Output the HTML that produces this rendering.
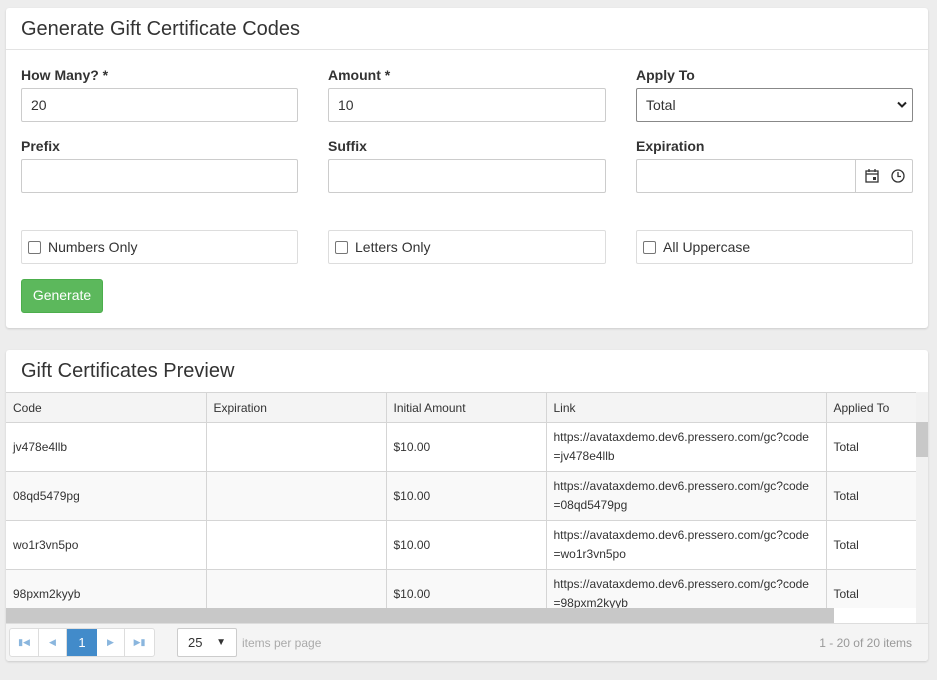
<!DOCTYPE html>
<html><head><style>
*{box-sizing:border-box;margin:0;padding:0}
body{width:937px;height:680px;background:#ededed;font-family:"Liberation Sans",Arial,sans-serif;color:#333;position:relative;overflow:hidden}
.panel{position:absolute;left:6px;width:922px;background:#fff;border-radius:3px;box-shadow:0 1px 2px rgba(0,0,0,.15)}
.title{font-size:20px;color:#333;padding:0 15px}
.lbl{position:absolute;font-size:14px;font-weight:bold;color:#333}
.inp{position:absolute;height:34px;border:1px solid #ccc;border-radius:2px;font-size:14px;padding:8px 9px;background:#fff}
.chk{position:absolute;height:34px;border:1px solid #ddd;border-radius:2px;font-size:14px;padding:8px 6px;width:277px}
.chk i{display:inline-block;width:13px;height:13px;border:1px solid #767676;border-radius:2px;vertical-align:-2px;margin-right:7px}
.btn{position:absolute;left:15px;top:271px;width:82px;height:34px;background:#5cb85c;border:1px solid #4cae4c;border-radius:3px;color:#fff;font-size:14px;text-align:center;line-height:31px}
table{border-collapse:collapse;position:absolute;left:0;top:42px;font-size:12px;table-layout:fixed}
td,th{border:1px solid #d5d5d5;padding:0 7px;text-align:left;font-weight:normal;vertical-align:middle}
th{height:30px;background:#f4f4f4;border-top:1px solid #d5d5d5}
td{height:49px}
tr:nth-child(odd) td{background:#f9f9f9}
.pg{position:absolute;font-size:12px}
</style></head><body>
<div class="panel" style="top:8px;height:320px">
 <div class="title" style="height:42px;line-height:42px;border-bottom:1px solid #e3e3e3">Generate Gift Certificate Codes</div>
 <div class="lbl" style="left:15px;top:59px">How Many? *</div>
 <div class="lbl" style="left:322px;top:59px">Amount *</div>
 <div class="lbl" style="left:630px;top:59px">Apply To</div>
 <div class="inp" style="left:15px;top:80px;width:277px">20</div>
 <div class="inp" style="left:322px;top:80px;width:278px">10</div>
 <div class="inp" style="left:630px;top:80px;width:277px;border-color:#888">Total<svg style="position:absolute;right:5px;top:12px" width="10" height="8" viewBox="0 0 10 8"><path d="M1 1.5L5 5.5L9 1.5" fill="none" stroke="#222" stroke-width="2"/></svg></div>
 <div class="lbl" style="left:15px;top:130px">Prefix</div>
 <div class="lbl" style="left:322px;top:130px">Suffix</div>
 <div class="lbl" style="left:630px;top:130px">Expiration</div>
 <div class="inp" style="left:15px;top:151px;width:277px"></div>
 <div class="inp" style="left:322px;top:151px;width:278px"></div>
 <div class="inp" style="left:630px;top:151px;width:277px;padding:0">
  <div style="position:absolute;left:218px;top:0;bottom:0;border-left:1px solid #ccc"></div>
  <svg style="position:absolute;left:227px;top:8px" width="16" height="16" viewBox="0 0 16 16"><rect x="2" y="3" width="12" height="11" fill="none" stroke="#333" stroke-width="1.3"/><line x1="2" y1="6" x2="14" y2="6" stroke="#333" stroke-width="1.3"/><line x1="5" y1="1" x2="5" y2="4" stroke="#333" stroke-width="1.3"/><line x1="11" y1="1" x2="11" y2="4" stroke="#333" stroke-width="1.3"/><rect x="9" y="9" width="3" height="3" fill="#333"/></svg>
  <svg style="position:absolute;left:253px;top:8px" width="16" height="16" viewBox="0 0 16 16"><circle cx="8" cy="8" r="6" fill="none" stroke="#333" stroke-width="1.3"/><path d="M8 4V8.5H11" fill="none" stroke="#333" stroke-width="1.3"/></svg>
 </div>
 <div class="chk" style="left:15px;top:222px"><i></i>Numbers Only</div>
 <div class="chk" style="left:322px;top:222px;width:278px"><i></i>Letters Only</div>
 <div class="chk" style="left:630px;top:222px"><i></i>All Uppercase</div>
 <div class="btn">Generate</div>
</div>
<div class="panel" style="top:350px;height:311px;overflow:hidden">
 <div class="title" style="height:42px;line-height:42px">Gift Certificates Preview</div>
 <table>
  <colgroup><col style="width:200px"><col style="width:180px"><col style="width:160px"><col style="width:280px"><col style="width:90px"></colgroup>
  <tr><th style="border-left:none">Code</th><th>Expiration</th><th>Initial Amount</th><th>Link</th><th>Applied To</th></tr>
  <tr><td style="border-left:none">jv478e4llb</td><td></td><td>$10.00</td><td style="line-height:19px">https://avataxdemo.dev6.pressero.com/gc?code =jv478e4llb</td><td>Total</td></tr>
  <tr><td style="border-left:none">08qd5479pg</td><td></td><td>$10.00</td><td style="line-height:19px">https://avataxdemo.dev6.pressero.com/gc?code =08qd5479pg</td><td>Total</td></tr>
  <tr><td style="border-left:none">wo1r3vn5po</td><td></td><td>$10.00</td><td style="line-height:19px">https://avataxdemo.dev6.pressero.com/gc?code =wo1r3vn5po</td><td>Total</td></tr>
  <tr><td style="border-left:none">98pxm2kyyb</td><td></td><td>$10.00</td><td style="line-height:19px">https://avataxdemo.dev6.pressero.com/gc?code =98pxm2kyyb</td><td>Total</td></tr>
 </table>
 <div style="position:absolute;left:0;top:258px;width:922px;height:15px;background:#fff"></div>
 <div style="position:absolute;left:0;top:258px;width:828px;height:15px;background:#c8c8c8"></div>
 <div style="position:absolute;left:910px;top:42px;width:12px;height:231px;background:#f1f1f1"></div>
 <div style="position:absolute;left:910px;top:72px;width:12px;height:35px;background:#c8c8c8"></div>
 <div style="position:absolute;left:0;top:273px;width:922px;height:38px;background:#f4f4f4;border-top:1px solid #ddd">
  <div style="position:absolute;left:3px;top:4px;width:146px;height:29px;border:1px solid #ddd;border-radius:3px;background:#fff;display:flex">
   <span style="width:29px;border-right:1px solid #ddd;color:#8ab6de;text-align:center;line-height:27px;font-size:9px">&#9646;&#9664;</span>
   <span style="width:28px;border-right:1px solid #ddd;color:#8ab6de;text-align:center;line-height:27px;font-size:9px">&#9664;</span>
   <span style="width:30px;background:#428bca;color:#fff;text-align:center;line-height:27px;font-size:13px">1</span>
   <span style="width:28px;border-right:1px solid #ddd;color:#8ab6de;text-align:center;line-height:27px;font-size:9px">&#9654;</span>
   <span style="width:29px;color:#8ab6de;text-align:center;line-height:27px;font-size:9px">&#9654;&#9646;</span>
  </div>
  <div style="position:absolute;left:171px;top:4px;width:60px;height:29px;border:1px solid #ccc;border-radius:2px;background:#fff;font-size:13px;line-height:27px;padding-left:10px">25<span style="position:absolute;right:10px;font-size:10px">&#9660;</span></div>
  <div class="pg" style="left:236px;top:12px;color:#aaa">items per page</div>
  <div class="pg" style="right:16px;top:12px;color:#999">1 - 20 of 20 items</div>
 </div>
</div>
</body></html>
